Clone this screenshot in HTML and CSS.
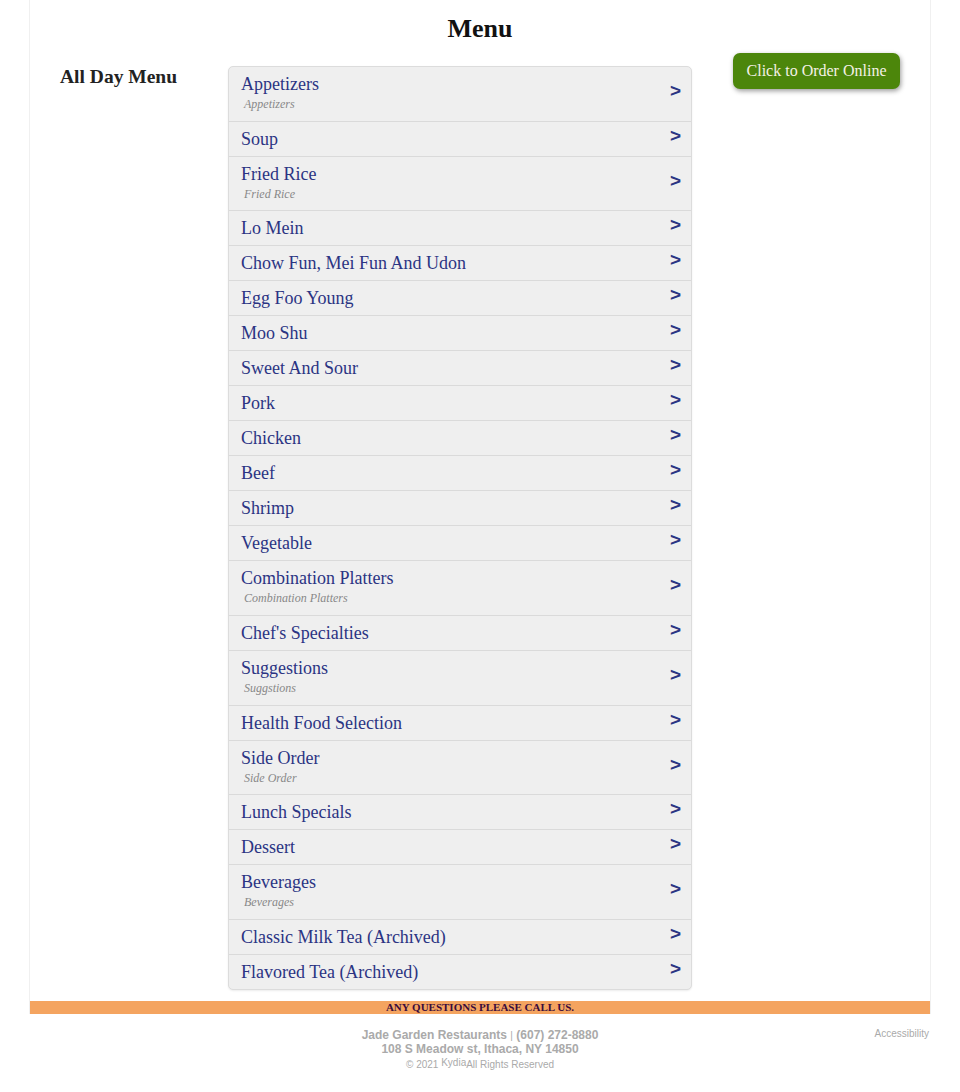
FILE: index.html
```html
<!DOCTYPE html>
<html>
<head>
<meta charset="utf-8">
<title>Menu</title>
<link rel="stylesheet" href="styles.css">
</head>
<body>
<div class="page">
  <h1 class="title">Menu</h1>
  <div class="content">
    <div class="side">All Day Menu</div>
    <ul class="menu">
      <li class="row"><div class="txt"><div class="name">Appetizers</div><div class="sub">Appetizers</div></div><span class="arrow">&gt;</span></li>
      <li class="row"><div class="txt"><div class="name">Soup</div></div><span class="arrow">&gt;</span></li>
      <li class="row"><div class="txt"><div class="name">Fried Rice</div><div class="sub">Fried Rice</div></div><span class="arrow">&gt;</span></li>
      <li class="row"><div class="txt"><div class="name">Lo Mein</div></div><span class="arrow">&gt;</span></li>
      <li class="row"><div class="txt"><div class="name">Chow Fun, Mei Fun And Udon</div></div><span class="arrow">&gt;</span></li>
      <li class="row"><div class="txt"><div class="name">Egg Foo Young</div></div><span class="arrow">&gt;</span></li>
      <li class="row"><div class="txt"><div class="name">Moo Shu</div></div><span class="arrow">&gt;</span></li>
      <li class="row"><div class="txt"><div class="name">Sweet And Sour</div></div><span class="arrow">&gt;</span></li>
      <li class="row"><div class="txt"><div class="name">Pork</div></div><span class="arrow">&gt;</span></li>
      <li class="row"><div class="txt"><div class="name">Chicken</div></div><span class="arrow">&gt;</span></li>
      <li class="row"><div class="txt"><div class="name">Beef</div></div><span class="arrow">&gt;</span></li>
      <li class="row"><div class="txt"><div class="name">Shrimp</div></div><span class="arrow">&gt;</span></li>
      <li class="row"><div class="txt"><div class="name">Vegetable</div></div><span class="arrow">&gt;</span></li>
      <li class="row"><div class="txt"><div class="name">Combination Platters</div><div class="sub">Combination Platters</div></div><span class="arrow">&gt;</span></li>
      <li class="row"><div class="txt"><div class="name">Chef's Specialties</div></div><span class="arrow">&gt;</span></li>
      <li class="row"><div class="txt"><div class="name">Suggestions</div><div class="sub">Suggstions</div></div><span class="arrow">&gt;</span></li>
      <li class="row"><div class="txt"><div class="name">Health Food Selection</div></div><span class="arrow">&gt;</span></li>
      <li class="row"><div class="txt"><div class="name">Side Order</div><div class="sub">Side Order</div></div><span class="arrow">&gt;</span></li>
      <li class="row"><div class="txt"><div class="name">Lunch Specials</div></div><span class="arrow">&gt;</span></li>
      <li class="row"><div class="txt"><div class="name">Dessert</div></div><span class="arrow">&gt;</span></li>
      <li class="row"><div class="txt"><div class="name">Beverages</div><div class="sub">Beverages</div></div><span class="arrow">&gt;</span></li>
      <li class="row"><div class="txt"><div class="name">Classic Milk Tea (Archived)</div></div><span class="arrow">&gt;</span></li>
      <li class="row"><div class="txt"><div class="name">Flavored Tea (Archived)</div></div><span class="arrow">&gt;</span></li>
    </ul>
    <div class="order"><a class="order-btn" href="#">Click to Order Online</a></div>
  </div>
  <div class="callbar">ANY QUESTIONS PLEASE CALL US.</div>
</div>
<footer class="footer">
  <div class="foot-main">
    <div class="foot-line"><b>Jade Garden Restaurants</b> <span class="sep">|</span> <b>(607) 272-8880</b></div>
    <div class="foot-line"><b>108 S Meadow st, Ithaca, NY 14850</b></div>
    <div class="copy">© 2021 <span class="kydia">Kydia</span>All Rights Reserved</div>
  </div>
  <a class="access" href="#">Accessibility</a>
</footer>
</body>
</html>
```

FILE: styles.css
```css
html, body {
  margin: 0;
  padding: 0;
  background: #fff;
}
body {
  font-family: "Liberation Serif", "Times New Roman", serif;
}
.page {
  width: 900px;
  margin: 0 auto;
  border-left: 1px solid #f0f0f0;
  border-right: 1px solid #f0f0f0;
}
.title {
  margin: 0;
  padding-top: 13px;
  height: 40px;
  line-height: 32px;
  font-size: 26px;
  font-weight: bold;
  text-align: center;
  color: #111;
}
.content {
  display: flex;
  align-items: flex-start;
  padding-left: 30px;
  padding-bottom: 11px;
}
.side {
  width: 168px;
  padding-top: 13px;
  font-size: 19.5px;
  font-weight: bold;
  line-height: 22px;
  color: #222;
}
.menu {
  list-style: none;
  margin: 13px 0 0 0;
  padding: 0;
  width: 462px;
  background: #efefef;
  border: 1px solid #dcdcdc;
  border-radius: 5px;
  box-shadow: 0 1px 2px rgba(0,0,0,0.08);
}
.row {
  display: flex;
  align-items: center;
  justify-content: space-between;
  padding: 7px 10px 7px 12px;
  border-top: 1px solid #dadada;
}
.row:first-child {
  border-top: none;
}
.name {
  font-size: 18px;
  line-height: 20px;
  color: #2b3483;
}
.sub {
  margin-top: 1px;
  padding-left: 3px;
  font-size: 12px;
  line-height: 18.67px;
  font-style: italic;
  color: #888;
}
.arrow {
  font-family: "Liberation Sans", Arial, sans-serif;
  font-weight: bold;
  font-size: 19px;
  color: #2b3483;
  margin-top: -6px;
}
.order {
  margin-left: 41px;
}
.order-btn {
  display: block;
  width: 167px;
  height: 36px;
  line-height: 35px;
  text-align: center;
  background: #4c860b;
  color: #f4f1e6;
  text-decoration: none;
  font-size: 16px;
  border-radius: 7px;
  box-shadow: 1px 2px 5px rgba(0,0,0,0.4);
}
.callbar {
  height: 13px;
  line-height: 13px;
  background: #f4a460;
  color: #3a0c3c;
  font-size: 11px;
  font-weight: bold;
  text-align: center;
}
.footer {
  position: relative;
  width: 900px;
  margin: 0 auto;
  padding-top: 14px;
  height: 65px;
  font-family: "Liberation Sans", Arial, sans-serif;
  color: #aaa;
}
.foot-main {
  text-align: center;
}
.foot-line {
  height: 14px;
  font-size: 12px;
  line-height: 14px;
}
.sep {
  font-size: 10px;
  line-height: 10px;
}
.copy {
  margin-top: 2px;
  font-size: 10px;
  line-height: 14px;
}
.kydia {
  position: relative;
  top: -2px;
}
.access {
  position: absolute;
  right: 1px;
  top: 14px;
  font-size: 10px;
  color: #aaa;
  text-decoration: none;
}
```
